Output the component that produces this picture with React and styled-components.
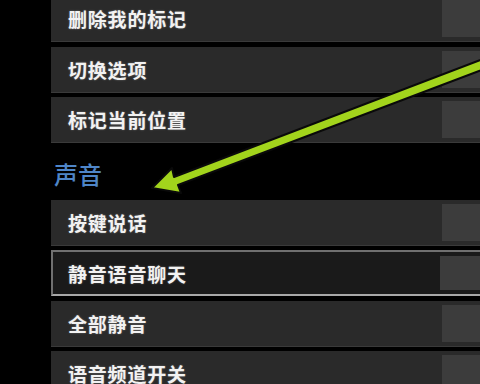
import React from 'react';
import styled, { createGlobalStyle } from 'styled-components';

const GlobalStyle = createGlobalStyle`
  html, body {
    margin: 0;
    padding: 0;
    background: #000000;
  }
  body {
    width: 480px;
    height: 384px;
    overflow: hidden;
    font-family: "Noto Sans CJK SC", "Noto Sans", sans-serif;
  }
`;

const Screen = styled.div`
  position: relative;
  width: 480px;
  height: 384px;
  overflow: hidden;
  background: #000000;
`;

const Menu = styled.div`
  display: flex;
  flex-direction: column;
  margin-top: -4px;
  padding-left: 51px;
  width: 441px;
`;

const Row = styled.div`
  display: flex;
  align-items: stretch;
  height: 46px;
  margin-bottom: 4.5px;
  box-sizing: border-box;
  background: ${(p) => (p.$selected ? '#1a1a1a' : '#2a2a2a')};
  border: ${(p) => (p.$selected ? '2px solid #707070' : 'none')};
  border-bottom: ${(p) => (p.$selected ? '2px solid #a8a8a8' : '1px solid #3a3a3a')};
`;

const Label = styled.div`
  flex: 1;
  display: flex;
  align-items: center;
  padding-left: ${(p) => (p.$selected ? '15px' : '17px')};
  color: #f2f2f2;
  font-size: 19px;
  font-weight: 700;
  letter-spacing: 0.8px;
  text-shadow: 0 0 2px rgba(255, 255, 255, 0.35);
`;

const Value = styled.div`
  width: 50px;
  margin: 4px 0;
  background: #3c3c3c;
`;

const Section = styled.div`
  display: flex;
  align-items: center;
  height: 52px;
  padding-left: 3px;
  color: #4f86c8;
  font-size: 24px;
  font-weight: 500;
`;

const Arrow = styled.svg`
  position: absolute;
  left: 0;
  top: 0;
  pointer-events: none;
`;

const topItems = ['删除我的标记', '切换选项', '标记当前位置'];
const soundItems = ['按键说话', '静音语音聊天', '全部静音', '语音频道开关'];

export default function App() {
  return (
    <Screen>
      <GlobalStyle />
      <Menu>
        {topItems.map((t) => (
          <Row key={t}>
            <Label>{t}</Label>
            <Value />
          </Row>
        ))}
        <Section>声音</Section>
        {soundItems.map((t) => {
          const sel = t === '静音语音聊天';
          return (
            <Row key={t} $selected={sel}>
              <Label $selected={sel}>{t}</Label>
              <Value />
            </Row>
          );
        })}
      </Menu>
      <Arrow width="480" height="384" viewBox="0 0 480 384">
        <g stroke="#0a0a0a" strokeWidth="2" strokeLinejoin="round">
          <path
            d="M500 63 L496 54 L174 177 L172 168 L152 188 L181 193 L178 185 Z"
            fill="#a2d41c"
          />
        </g>
      </Arrow>
    </Screen>
  );
}
